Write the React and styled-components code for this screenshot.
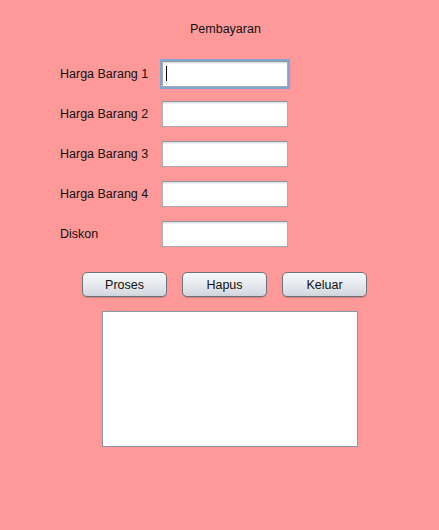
import React from "react";
import styled, { createGlobalStyle } from "styled-components";

const Global = createGlobalStyle`
  html, body { margin: 0; padding: 0; }
  body {
    background: #ff9999;
    font-family: "Liberation Sans", Arial, sans-serif;
    font-size: 12.5px;
    color: #111;
  }
`;

const Frame = styled.div`
  width: 439px;
  height: 530px;
  background: #ff9999;
  box-sizing: border-box;
  padding-top: 21px;
  display: flex;
  flex-direction: column;
`;

const Title = styled.div`
  padding-left: 190px;
  height: 16px;
  line-height: 16px;
`;

const Form = styled.div`
  margin-top: 24px;
  padding-left: 60px;
  display: grid;
  grid-template-columns: 102px 126px;
  row-gap: 14px;
  align-items: center;
`;

const Label = styled.label`
  line-height: 16px;
  white-space: nowrap;
`;

const Field = styled.div`
  position: relative;
  box-sizing: border-box;
  width: 126px;
  height: 26px;
  background: #fff;
  border: 1px solid #a6abb0;
  border-top-color: #8f959b;
  box-shadow: inset 0 1px 0 #dfe2e5, inset 0 2px 0 #eef0f2;
  ${(p) =>
    p.$focused &&
    `
    outline: 2px solid #7fa7d4;
    outline-offset: 0px;
  `}
`;

const Caret = styled.span`
  position: absolute;
  left: 3px;
  top: 4px;
  width: 1px;
  height: 15px;
  background: #000;
`;

const Buttons = styled.div`
  margin-top: 25px;
  padding-left: 82px;
  display: flex;
  gap: 15px;
`;

const Button = styled.button`
  box-sizing: border-box;
  width: 85px;
  height: 25px;
  padding: 0;
  border: 1px solid #6e737a;
  border-radius: 5px;
  background: linear-gradient(#f7f8fa 0%, #e9ebef 45%, #d8dce3 85%, #cfd3db 100%);
  font-family: "Liberation Sans", Arial, sans-serif;
  font-size: 12.5px;
  color: #111;
  box-shadow: 0 1px 0 rgba(120, 80, 80, 0.35);
`;

const Output = styled.div`
  margin-top: 14px;
  margin-left: 102px;
  box-sizing: border-box;
  width: 256px;
  height: 136px;
  background: #fff;
  border: 1px solid #8d98a3;
`;

const labels = ["Harga Barang 1", "Harga Barang 2", "Harga Barang 3", "Harga Barang 4", "Diskon"];

export default function App() {
  return (
    <>
      <Global />
      <Frame>
        <Title>Pembayaran</Title>
        <Form>
          {labels.map((l, i) => (
            <React.Fragment key={l}>
              <Label>{l}</Label>
              <Field $focused={i === 0}>{i === 0 && <Caret />}</Field>
            </React.Fragment>
          ))}
        </Form>
        <Buttons>
          <Button>Proses</Button>
          <Button>Hapus</Button>
          <Button>Keluar</Button>
        </Buttons>
        <Output />
      </Frame>
    </>
  );
}
